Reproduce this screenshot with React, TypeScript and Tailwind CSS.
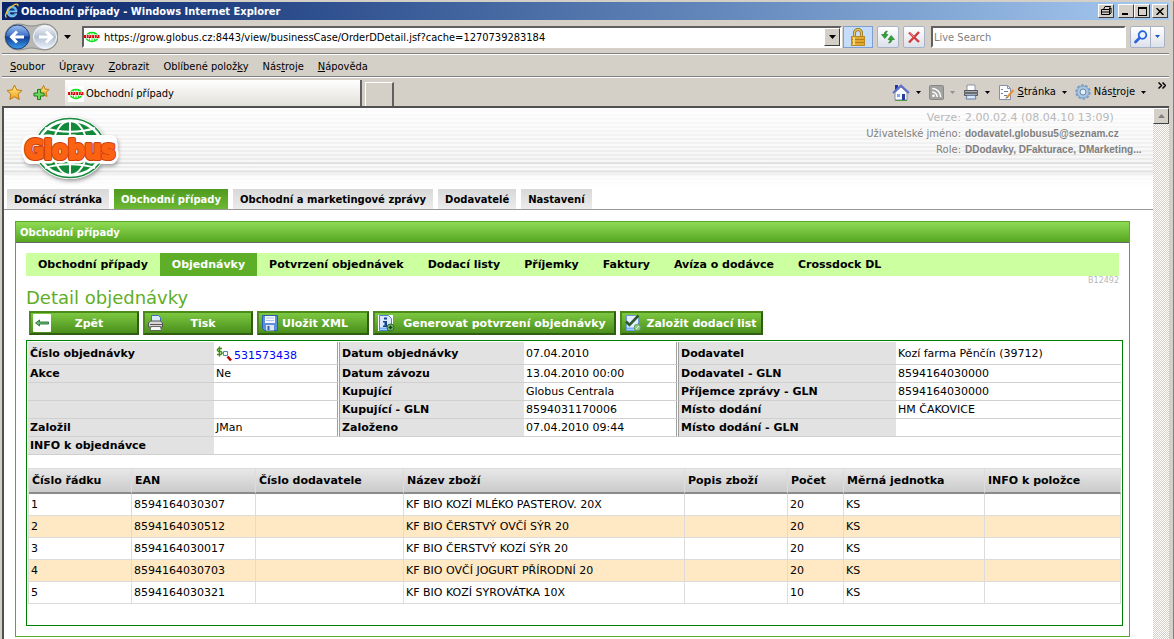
import React, { useState } from 'react';

const MAIN_TABS = [
  'Domácí stránka',
  'Obchodní případy',
  'Obchodní a marketingové zprávy',
  'Dodavatelé',
  'Nastavení',
];

const SUB_TABS = [
  'Obchodní případy',
  'Objednávky',
  'Potvrzení objednávek',
  'Dodací listy',
  'Příjemky',
  'Faktury',
  'Avíza o dodávce',
  'Crossdock DL',
];

// [before, accelerator, after]
const MENU = [
  ['', 'S', 'oubor'],
  ['Úp', 'r', 'avy'],
  ['', 'Z', 'obrazit'],
  ['Oblíbené polož', 'k', 'y'],
  ['Nás', 't', 'roje'],
  ['', 'N', 'ápověda'],
];

const INFO_ROWS = [
  ['Číslo objednávky', '531573438', 'Datum objednávky', '07.04.2010', 'Dodavatel', 'Kozí farma Pěnčín (39712)'],
  ['Akce', 'Ne', 'Datum závozu', '13.04.2010 00:00', 'Dodavatel - GLN', '8594164030000'],
  ['', '', 'Kupující', 'Globus Centrala', 'Příjemce zprávy - GLN', '8594164030000'],
  ['', '', 'Kupující - GLN', '8594031170006', 'Místo dodání', 'HM ČAKOVICE'],
  ['Založil', 'JMan', 'Založeno', '07.04.2010 09:44', 'Místo dodání - GLN', ''],
];

const ITEM_HEAD = ['Číslo řádku', 'EAN', 'Číslo dodavatele', 'Název zboží', 'Popis zboží', 'Počet', 'Měrná jednotka', 'INFO k položce'];

const ITEMS = [
  ['1', '8594164030307', '', 'KF BIO KOZÍ MLÉKO PASTEROV. 20X', '', '20', 'KS', ''],
  ['2', '8594164030512', '', 'KF BIO ČERSTVÝ OVČÍ SÝR 20', '', '20', 'KS', ''],
  ['3', '8594164030017', '', 'KF BIO ČERSTVÝ KOZÍ SÝR 20', '', '20', 'KS', ''],
  ['4', '8594164030703', '', 'KF BIO OVČÍ JOGURT PŘÍRODNÍ 20', '', '20', 'KS', ''],
  ['5', '8594164030321', '', 'KF BIO KOZÍ SYROVÁTKA 10X', '', '10', 'KS', ''],
];

const RAISED = 'border border-t-white border-l-white border-r-[#404040] border-b-[#404040] bg-[#d4d0c8]';

const IeIcon = () => (
  <svg width="16" height="16" viewBox="0 0 16 16" fill="none">
    <path d="M13 9H5.200c.2 2.400 1.600 3 3 3 1.200 0 2-.5 2.400-1.300h2.300C12 13.200 10.300 14 8.200 14 5 14 2.900 11.900 2.900 8.700 2.900 5.500 5 3.200 8.100 3.200 11.300 3.200 13.200 5.500 13 9z" fill="#4db1f2" stroke="#d6efff" strokeWidth=".5" />
    <path d="M5.400 7.400h5.200C10.400 6 9.500 5.200 8.100 5.200S5.600 6 5.400 7.400z" fill="#16337a" />
    <path d="M2.500 14.500C-.5 13 4 5.500 9 2.500c3-1.900 5.700-2 4.800.8" stroke="#f7c531" strokeWidth="1.300" />
  </svg>
);

const SiteIcon = () => (
  <svg width="16" height="16" viewBox="0 0 16 16" className="shrink-0">
    <rect width="16" height="16" fill="#fff" />
    <ellipse cx="8" cy="8" rx="6" ry="4.500" fill="none" stroke="#12e01c" strokeWidth="1.500" />
    <path d="M5.500 4v8M8 3.500v9M10.500 4v8" stroke="#12e01c" />
    <path d="M0 7.500h16" stroke="#fff" strokeWidth="4" />
    <path d="M0 7.500h16" stroke="#e01010" strokeWidth="3" strokeDasharray="2 .7" />
    <path d="M1 8.500h1M5 8.500h1M9 8.500h1M13 8.500h1" stroke="#800" />
  </svg>
);

const NavArrows = () => (
  <svg width="54" height="28" viewBox="0 0 54 28">
    <defs>
      <linearGradient id="back" x1="0" y1="0" x2="0" y2="1">
        <stop offset="0" stopColor="#9fc0ee" />
        <stop offset=".45" stopColor="#3f70c6" />
        <stop offset=".5" stopColor="#123c93" />
        <stop offset="1" stopColor="#39a0ee" />
      </linearGradient>
      <linearGradient id="fwd" x1="0" y1="0" x2="0" y2="1">
        <stop offset="0" stopColor="#f4f6fa" />
        <stop offset=".5" stopColor="#b4c0d2" />
        <stop offset="1" stopColor="#e9f1fb" />
      </linearGradient>
    </defs>
    <path d="M14 1C20 1 22 3 27.500 3S36 1 41 1a13 13 0 0 1 0 26c-5 0-8-2-13.500-2S20 27 14 27A13 13 0 0 1 14 1z" fill="#b7b7b5" stroke="#8b8b88" />
    <circle cx="13.500" cy="14" r="12" fill="url(#back)" stroke="#21427f" />
    <circle cx="41" cy="14" r="11.500" fill="url(#fwd)" stroke="#f5f8fc" />
    <path d="M20 14H8M13 8.500 7.500 14l5.500 5.500" fill="none" stroke="#fff" strokeWidth="3" />
    <path d="M35 14h12M42 8.500l5.500 5.500-5.500 5.500" fill="none" stroke="#fff" strokeWidth="3" />
  </svg>
);

const Caret = ({ className = 'fill-black' }: { className?: string }) => (
  <svg width="7" height="4" viewBox="0 0 7 4" className={className}>
    <path d="M0 0h7L3.500 4z" />
  </svg>
);

const SmallCaret = ({ className = 'fill-black' }: { className?: string }) => (
  <svg width="5" height="3" viewBox="0 0 5 3" className={className}>
    <path d="M0 0h5L2.500 3z" />
  </svg>
);

const LockIcon = () => (
  <svg width="14" height="18" viewBox="0 0 14 18">
    <path d="M3.500 9V5a3.500 3.500 0 0 1 7 0v4" fill="none" stroke="#8a6a1c" strokeWidth="3" />
    <path d="M3.500 9V5a3.500 3.500 0 0 1 7 0v4" fill="none" stroke="#edc95c" strokeWidth="1.500" />
    <rect x=".5" y="8.500" width="13" height="9" fill="#e2a92d" stroke="#b98a26" />
    <path d="M1 11.500h12M1 14.500h12" stroke="#b27d16" />
    <path d="M3 9v8" stroke="#f6d77e" strokeWidth="2" />
  </svg>
);

const RefreshIcon = () => (
  <svg width="16" height="16" viewBox="0 0 16 16">
    <path d="M7.500 2C5 2 4 4 4 5.500H1.500L4.800 9.500 8 5.500H6c0-1.300.5-2.500 1.500-3.500z" fill="#31a336" stroke="#1b7a25" strokeWidth=".6" />
    <path d="M8.500 14c2.500 0 3.500-2 3.500-3.500h2.500L11.200 6.500 8 10.500h2c0 1.300-.5 2.500-1.500 3.500z" fill="#31a336" stroke="#1b7a25" strokeWidth=".6" />
  </svg>
);

const StopIcon = () => (
  <svg width="14" height="14" viewBox="0 0 14 14">
    <path d="M2 2.500l10 9.500M12 2 2 12.500" stroke="#d03a3a" strokeWidth="2.400" />
    <path d="M2.500 2.500 7 7" stroke="#ee8a88" />
  </svg>
);

const SearchIcon = () => (
  <svg width="14" height="14" viewBox="0 0 14 14" fill="none">
    <circle cx="8.500" cy="5" r="3.800" stroke="#2a62e0" strokeWidth="1.800" fill="#eaf4ff" />
    <path d="M5.500 8 1.500 12" stroke="#2a62e0" strokeWidth="2.600" strokeLinecap="round" />
  </svg>
);

const Star = () => (
  <svg width="17" height="17" viewBox="0 0 17 17">
    <defs>
      <linearGradient id="star" x1="0" y1="0" x2="0" y2="1">
        <stop offset="0" stopColor="#fff08a" />
        <stop offset="1" stopColor="#f2a01c" />
      </linearGradient>
    </defs>
    <path d="M8.500 1l2.200 4.900 5.300.6-3.900 3.600 1.100 5.400-4.700-2.700-4.700 2.700 1.100-5.400L1 6.500l5.300-.6z" fill="url(#star)" stroke="#c07a12" />
  </svg>
);

const StarAdd = () => (
  <svg width="17" height="17" viewBox="0 0 17 17">
    <path d="M10.500 1.500l1.600 3.600 4 .4-3 2.800.9 4.200-3.500-2-3.500 2 .9-4.200-3-2.800 4-.4z" fill="url(#star)" stroke="#c07a12" />
    <path d="M4.500 5.500h3v3.500h3.500v3H7.500v3.500h-3V12H1V9h3.500z" fill="#6fd65b" stroke="#1f7f20" />
  </svg>
);

const HomeIcon = () => (
  <svg width="18" height="17" viewBox="0 0 18 17">
    <path d="M3 1h3v5H3z" fill="#2430b0" />
    <path d="M3 8.500 9 3l6 5.500V16H3z" fill="#f7f9ff" stroke="#7d8cb0" />
    <path d="M1 9 9 1.500 17 9" fill="none" stroke="#5a6fc8" strokeWidth="2" />
    <path d="M10 10h3v6h-3z" fill="#2a3a98" />
    <path d="M5 10h3v3H5z" fill="#7aa8e8" />
    <path d="M3 16.500h12" stroke="#4f9a3e" />
  </svg>
);

const RssIcon = () => (
  <svg width="15" height="15" viewBox="0 0 15 15" fill="none">
    <rect x=".5" y=".5" width="14" height="14" rx="1" fill="#a3a3a1" stroke="#888" />
    <circle cx="4.500" cy="10.800" r="1.300" fill="#fff" />
    <path d="M3.200 7a5 5 0 0 1 5 5M3.200 3.500a8.500 8.500 0 0 1 8.500 8.500" stroke="#fff" strokeWidth="1.500" />
  </svg>
);

const PrinterIcon = () => (
  <svg width="16" height="16" viewBox="0 0 16 16">
    <path d="M4 1h8v6H4z" fill="#fff" stroke="#8a93a5" />
    <path d="M1.500 6.500h13v5h-13z" fill="#a9abb2" stroke="#54565e" />
    <path d="M1 9h14" stroke="#6a6c73" strokeWidth="2" />
    <path d="M4 11.500h8l1 3.500H3z" fill="#d5e8fc" stroke="#6d7fa0" />
  </svg>
);

const PageIcon = () => (
  <svg width="17" height="17" viewBox="0 0 17 17">
    <path d="M1.500 1.500h8l3 3v11h-11z" fill="#fdfdff" stroke="#8690a8" />
    <path d="M9.500 1.500v3h3" fill="none" stroke="#8690a8" />
    <path d="M3 5.500h2M6 7.500h4M3 9.500h2M6 11.500h3" stroke="#7380a0" />
    <path d="M15.500 6 9 13.500" stroke="#e8912e" strokeWidth="2" />
    <path d="M9.300 13 8 14.500" stroke="#333" />
  </svg>
);

const GearIcon = () => (
  <svg width="16" height="16" viewBox="0 0 16 16" fill="none">
    <circle cx="8" cy="8" r="6.700" stroke="#7899bd" strokeWidth="2" strokeDasharray="2.600 1.600" />
    <circle cx="8" cy="8" r="4.800" stroke="#a9c6e4" strokeWidth="3" />
    <circle cx="8" cy="8" r="6" stroke="#6f93bb" strokeWidth=".7" />
    <circle cx="8" cy="8" r="3" fill="#e6eef6" stroke="#6386ad" />
  </svg>
);

// white halo, dark rim, orange face
const LOGO_LAYERS = [
  { fill: '#ffffff', stroke: '#ffffff', width: 9 },
  { fill: '#c8400c', stroke: '#c8400c', width: 4 },
  { fill: '#fb6313', stroke: '#fb6313', width: 2 },
];

const GlobusLogo = () => (
  <svg width="104" height="72" viewBox="0 0 104 72" role="img" aria-label="Globus">
    <defs>
      <filter id="soft" x="-20%" y="-20%" width="140%" height="150%">
        <feDropShadow dx="1" dy="2" stdDeviation="2" floodColor="#555" floodOpacity=".6" />
      </filter>
    </defs>
    <g filter="url(#soft)">
      <ellipse cx="51" cy="34" rx="36" ry="31" fill="#fff" />
      <rect x="5" y="22" width="93" height="28" rx="6" fill="#fff" />
    </g>
    <ellipse cx="51" cy="34" rx="34.500" ry="29.500" fill="none" stroke="#128a3a" strokeWidth="1.500" />
    <ellipse cx="51" cy="34" rx="31" ry="26" fill="#128a3a" />
    <g fill="none" stroke="#fff" strokeWidth="2">
      <path d="M51 6v56" />
      <ellipse cx="51" cy="34" rx="17" ry="27" />
      <path d="M26 14c14 5 36 5 50 0M26 54c14-5 36-5 50 0" />
    </g>
    <rect x="4" y="21" width="94" height="27" rx="6" fill="#fff" />
    {LOGO_LAYERS.map((l, i) => (
      <text
        key={l.fill}
        x="51"
        y="45"
        textAnchor="middle"
        fill={l.fill}
        stroke={l.stroke}
        strokeWidth={l.width}
        strokeLinejoin="round"
        aria-hidden={i > 0}
        className="font-['DejaVu_Sans_Condensed','DejaVu_Sans',sans-serif] text-[26px] font-bold"
      >
        Globus
      </text>
    ))}
  </svg>
);

const BackArrow = () => (
  <svg width="18" height="18" viewBox="0 0 18 18">
    <rect width="18" height="18" rx="1" fill="#fff" />
    <path d="M2.500 9 6.500 6v2h9v2h-9v2z" fill="#6db86e" stroke="#2f7a44" />
  </svg>
);

const PrintIcon = () => (
  <svg width="18" height="18" viewBox="0 0 18 18">
    <path d="M4.500 8V1.500h7l2 2V8z" fill="#d9e9ff" stroke="#3d6fc4" />
    <path d="M1.500 13V9l2-2h10l2 2v4z" fill="#d7d7d7" stroke="#555" />
    <path d="M3 10.500h12" stroke="#555" />
    <path d="M4 12.500h9.500l1 4H3z" fill="#f5f5f5" stroke="#666" />
  </svg>
);

const SaveIcon = () => (
  <svg width="18" height="18" viewBox="0 0 18 18">
    <path d="M1.500 1.500h15v15h-13l-2-2z" fill="#5c8fdc" stroke="#2a5cb0" />
    <path d="M4 2h10v7H4z" fill="#f6f9ff" />
    <path d="M5 4h8M5 6.500h8" stroke="#a9c4ea" />
    <path d="M5 11h8v5.500H5z" fill="#dfe5ee" />
    <path d="M6.500 12h2v4h-2z" fill="#2a5cb0" />
  </svg>
);

const InfoDocIcon = () => (
  <svg width="18" height="18" viewBox="0 0 18 18">
    <rect x="1" y="1" width="15" height="16" fill="#fff" />
    <path d="M2.500 1.500h9l3 3v12h-12z" fill="#dbe9ff" stroke="#4a82cf" />
    <path d="M7 3.500h3v2H7zM6 7h4v4.500h1.500V13H6v-1.500h1.500v-3H6z" fill="#17438f" />
    <path d="M3 14.500h8" stroke="#6db2ff" strokeWidth="2" />
    <circle cx="13.500" cy="13.500" r="3.500" fill="#7fc676" stroke="#24662b" />
    <path d="M13.500 11.500v4M11.500 13.500h4" stroke="#123f18" strokeWidth="1.500" />
  </svg>
);

const CheckDocIcon = () => (
  <svg width="18" height="18" viewBox="0 0 18 18">
    <path d="M2.500 1.500h9l3 3v12h-12z" fill="#e6efff" stroke="#6c97d4" />
    <path d="M3 14.500h8" stroke="#6db2ff" strokeWidth="2" />
    <path d="M2 7.500 5.500 11 14.500 1.500" fill="none" stroke="#2c5a2e" strokeWidth="2.600" />
    <circle cx="13.500" cy="13.500" r="3.300" fill="#8fc986" stroke="#5e9a58" />
    <path d="m12 15 3-3" stroke="#e8f6e4" />
  </svg>
);

const MoneySearchIcon = () => (
  <svg width="16" height="16" viewBox="0 0 16 16" fill="none">
    <path d="M6 2.500H2.500L1.500 3.500v1l1 1H5l1 1v1l-1 1H1M3.500.5v10" stroke="#3c8f12" strokeWidth="1.400" />
    <path d="M7.500 5.500h4v4h-4z" fill="#f4faff" stroke="#5688a8" />
    <path d="m11.500 10.500 3.500 4" stroke="#c00000" strokeWidth="2.500" />
  </svg>
);

const ToolItem = ({ icon, caret, children }: { icon: React.ReactNode; caret?: string; children?: React.ReactNode }) => (
  <button className="flex items-center gap-[3px]">
    {icon}
    {children && <span>{children}</span>}
    <span className="ml-[3px]">
      <SmallCaret className={caret || 'fill-black'} />
    </span>
  </button>
);

const BUTTONS = [
  { label: 'Zpět', icon: <BackArrow />, size: 'w-[110px] pr-[10px]' },
  { label: 'Tisk', icon: <PrintIcon />, size: 'w-[110px] pr-[10px]' },
  { label: 'Uložit XML', icon: <SaveIcon />, size: 'w-[112px] pr-[16px]' },
  { label: 'Generovat potvrzení objednávky', icon: <InfoDocIcon />, size: 'w-[243px]' },
  { label: 'Založit dodací list', icon: <CheckDocIcon />, size: 'w-[143px]' },
];

const Chrome = () => (
  <header className="text-[11px] font-['DejaVu_Sans_Condensed','DejaVu_Sans',sans-serif]">
    <div className="flex h-[18px] items-center bg-linear-to-r from-[#0a246a] to-[#a6caf0] pr-px pl-[2px] text-white">
      <IeIcon />
      <span className="grow pt-px pl-px font-bold whitespace-nowrap">Obchodní případy - Windows Internet Explorer</span>
      <button aria-label="Tisk okna" className={`${RAISED} mr-1 flex h-[14px] w-4 items-center justify-center`}>
        <svg width="12" height="10" viewBox="0 0 12 10" fill="none" stroke="#000">
          <path d="M3.500 3.500 5 .5h5.500L9 3.500M1.500 3.500h8v5h-8zM9.500 3.500l1.500-1.500v5l-1.500 1.500M1.500 6h8" />
        </svg>
      </button>
      <button aria-label="Minimalizovat" className={`${RAISED} flex h-[14px] w-4 items-center justify-center`}>
        <svg width="10" height="8"><path d="M1 6h6v2H1z" /></svg>
      </button>
      <button aria-label="Maximalizovat" className={`${RAISED} mr-[2px] flex h-[14px] w-4 items-center justify-center`}>
        <svg width="9" height="9"><path d="M0 0h9v9H0zM1 2v6h7V2z" fillRule="evenodd" /></svg>
      </button>
      <button aria-label="Zavřít" className={`${RAISED} flex h-[14px] w-4 items-center justify-center`}>
        <svg width="8" height="7"><path d="M.5 0l7 7M7.500 0l-7 7" stroke="#000" strokeWidth="1.500" /></svg>
      </button>
    </div>

    <div className="flex h-[34px] items-center border-b border-[#808080] pr-1 pl-[2px]">
      <button aria-label="Zpět a vpřed" className="shrink-0"><NavArrows /></button>
      <button aria-label="Poslední stránky" className="mr-[11px] ml-[6px]"><Caret /></button>
      <div className="flex h-[22px] grow items-center border-2 border-t-[#606060] border-r-white border-b-white border-l-[#606060] bg-white">
        <SiteIcon />
        <input
          aria-label="Adresa"
          className="min-w-0 grow bg-transparent pt-[2px] pl-[4px] outline-none"
          defaultValue="https://grow.globus.cz:8443/view/businessCase/OrderDDetail.jsf?cache=1270739283184"
        />
        <button aria-label="Zobrazit adresy" className={`${RAISED} flex h-[18px] w-4 items-center justify-center`}><Caret /></button>
      </div>
      <button aria-label="Zabezpečení" className="ml-px flex h-[22px] w-[30px] items-center justify-center border border-[#7e9fd0] bg-[#c6dcfb]">
        <LockIcon />
      </button>
      <button aria-label="Obnovit" className="ml-1 flex h-[22px] w-[22px] items-center justify-center rounded-xs border border-[#a9b3c8] bg-linear-to-b from-white to-[#dde1ea]">
        <RefreshIcon />
      </button>
      <button aria-label="Zastavit" className="ml-1 flex h-[22px] w-[22px] items-center justify-center rounded-xs border border-[#a9b3c8] bg-linear-to-b from-white to-[#dde1ea]">
        <StopIcon />
      </button>
      <input
        aria-label="Hledat"
        placeholder="Live Search"
        className="ml-[6px] h-[22px] w-[195px] border-2 border-t-[#606060] border-r-white border-b-white border-l-[#606060] bg-white px-px pt-[2px] outline-none placeholder:text-[#808080]"
      />
      <div className="ml-1 flex h-[22px] rounded-xs border border-[#a9b3c8] bg-linear-to-b from-white to-[#dde1ea]">
        <button aria-label="Spustit hledání" className="flex w-[20px] items-center justify-center border-r border-[#a9b3c8]"><SearchIcon /></button>
        <button aria-label="Možnosti hledání" className="flex w-[13px] items-center justify-center"><SmallCaret className="fill-[#1f55c8]" /></button>
      </div>
    </div>

    <nav className="flex h-[23px] items-center gap-[14px] border-t border-b border-t-white border-b-[#808080] pt-[2px] pl-2">
      {MENU.map(([a, b, c]) => (
        <button key={a + b + c}>
          {a}
          <span className="underline">{b}</span>
          {c}
        </button>
      ))}
    </nav>

    <div className="flex h-[29px] items-end border-t border-white">
      <div className="flex h-full w-[63px] items-center gap-[10px] pl-1">
        <button aria-label="Oblíbené"><Star /></button>
        <button aria-label="Přidat k oblíbeným"><StarAdd /></button>
      </div>
      <button className="flex h-[26px] w-[297px] items-center gap-[2px] border-r-2 border-[#606060] bg-linear-to-b from-white to-[#e2e0da] pt-px pl-[3px]">
        <SiteIcon />
        Obchodní případy
      </button>
      <button aria-label="Nová karta" className="ml-[3px] h-6 w-[29px] border border-r-2 border-b-0 border-white border-r-[#606060]" />
      <div className="ml-auto flex h-full items-center gap-2 pr-[3px]">
        <ToolItem icon={<HomeIcon />} />
        <ToolItem icon={<RssIcon />} caret="fill-[#909090]" />
        <ToolItem icon={<PrinterIcon />} />
        <ToolItem icon={<PageIcon />}><u>S</u>tránka</ToolItem>
        <ToolItem icon={<GearIcon />}>Nás<u>t</u>roje</ToolItem>
        <button aria-label="Další nástroje" className="self-start pt-1 pl-1">
          <svg width="8" height="7" viewBox="0 0 8 7" fill="none" stroke="#000" strokeWidth="1.500">
            <path d="M.5.5l3 3-3 3M4.500.5l3 3-3 3" />
          </svg>
        </button>
      </div>
    </div>
  </header>
);

const Banner = () => (
  <div className="flex h-[81px] justify-between bg-[repeating-linear-gradient(rgba(255,255,255,0.6)_0_2px,transparent_2px_4px),linear-gradient(#fcfcfc,#ebebeb_54px,#d9d9d9_55px,#f0f0f0_57px,#ececec_63px,#d6d6d6_64px,#d6d6d6_65px,#f7f7f7_67px,#ffffff)] pl-[15px]">
    <div className="pt-[6px]"><GlobusLogo /></div>
    <dl className="grid h-12 grid-cols-[auto_188px] gap-x-1 pt-[2px] text-[10px] leading-4 whitespace-nowrap text-[#808080]">
      <dt className="text-right text-[11px] text-[#b8b8b8]">Verze:</dt>
      <dd className="text-[11px] text-[#b8b8b8]">2.00.02.4 (08.04.10 13:09)</dd>
      <dt className="text-right">Uživatelské jméno:</dt>
      <dd className="font-['Liberation_Sans',sans-serif] font-bold">dodavatel.globusu5@seznam.cz</dd>
      <dt className="text-right">Role:</dt>
      <dd className="font-['Liberation_Sans',sans-serif] font-bold">DDodavky, DFakturace, DMarketing...</dd>
    </dl>
  </div>
);

const InfoTable = () => (
  <table className="w-full table-fixed border-separate border-spacing-0">
    <colgroup>
      <col className="w-[186px]" />
      <col className="w-[126px]" />
      <col className="w-[184px]" />
      <col className="w-[155px]" />
      <col className="w-[217px]" />
      <col />
    </colgroup>
    <tbody>
      {INFO_ROWS.map((row, r) => (
        <tr key={r} className={r === 0 ? 'h-[23px]' : 'h-[18px]'}>
          {row.map((cell, c) =>
            c % 2 === 0 ? (
              <th key={c} scope="row" className="border-b border-[#d0d0d0] bg-[#e2e2e2] px-[2px] pt-px text-left font-bold whitespace-nowrap">{cell}</th>
            ) : (
              <td key={c} className={`border-b border-[#d0d0d0] px-[2px] pt-px whitespace-nowrap ${c < 5 ? 'border-r-3 border-r-[#a0a0a0] [border-right-style:double]' : ''}`}>
                {r === 0 && c === 1 ? (
                  <a href="#objednavka" className="flex items-center gap-[2px] text-[#0000ff]">
                    <MoneySearchIcon />
                    <span className="pt-1">{cell}</span>
                  </a>
                ) : (
                  cell
                )}
              </td>
            )
          )}
        </tr>
      ))}
      <tr className="h-[18px]">
        <th scope="row" className="border-b border-[#d0d0d0] bg-[#e2e2e2] px-[2px] pt-px text-left font-bold whitespace-nowrap">INFO k objednávce</th>
        <td colSpan={5} className="border-b border-[#d0d0d0]" />
      </tr>
    </tbody>
  </table>
);

const ItemTable = () => (
  <table className="mt-[13px] w-full table-fixed border-separate border-spacing-0 border-t border-l border-[#dcdcdc]">
    <colgroup>
      <col className="w-[103px]" />
      <col className="w-[124px]" />
      <col className="w-[148px]" />
      <col />
      <col className="w-[103px]" />
      <col className="w-[56px]" />
      <col className="w-[141px]" />
      <col className="w-[136px]" />
    </colgroup>
    <thead>
      <tr className="h-[25px] bg-linear-to-b from-[#e8e8e8] to-[#c8c8c8]">
        {ITEM_HEAD.map(h => (
          <th key={h} scope="col" className="border-r border-b-2 border-r-[#dcdcdc] border-b-[#8b8b8b] px-[3px] pt-px text-left font-bold whitespace-nowrap">{h}</th>
        ))}
      </tr>
    </thead>
    <tbody>
      {ITEMS.map(row => (
        <tr key={row[0]} className="h-[22px] even:bg-[#ffe8c4]">
          {row.map((cell, i) => (
            <td key={i} className="border-r border-b border-[#dcdcdc] px-[2px] pt-px whitespace-nowrap">{cell}</td>
          ))}
        </tr>
      ))}
    </tbody>
  </table>
);

const App: React.FC = () => {
  const [mainTab, setMainTab] = useState(1);
  const [subTab, setSubTab] = useState(1);

  return (
    <div className="flex min-h-screen flex-col border-t-2 border-r border-l-2 border-[#d4d0c8] border-r-[#808080] bg-[#d4d0c8] pr-[4px] text-[11px] leading-[14px] text-black font-['DejaVu_Sans',sans-serif]">
      <Chrome />

      <div className="flex grow border-t-2 border-l-2 border-[#505050] bg-white">
        <main className="min-w-0 grow">
          <Banner />

          <nav className="flex gap-[5px] border-b border-[#999] pl-[3px] text-[10px] font-bold">
            {MAIN_TABS.map((tab, i) => (
              <button
                key={tab}
                onClick={() => setMainTab(i)}
                className={`h-5 px-[7px] pt-px whitespace-nowrap ${i === mainTab ? 'bg-linear-to-b from-[#4f9a1e] to-[#6cb833] text-white' : 'bg-linear-to-b from-[#d8d8d8] to-[#ececec]'}`}
              >
                {tab}
              </button>
            ))}
          </nav>

          <section className="mt-[11px] mr-[23px] ml-[11px] border border-[#5ba829]">
            <h2 className="flex h-[21px] items-center border-b border-[#666] bg-linear-to-b from-[#8fdb54] to-[#56a61f] pt-px pl-1 text-[10px] font-bold text-white">
              Obchodní případy
            </h2>
            <div className="pt-[10px] pr-[6px] pb-[10px] pl-[10px]">
              <nav className="mr-[4px] flex bg-[#ccff9f] font-bold">
                {SUB_TABS.map((tab, i) => (
                  <button
                    key={tab}
                    onClick={() => setSubTab(i)}
                    className={`h-[23px] px-3 pt-px whitespace-nowrap ${i === subTab ? 'bg-[#5fae27] text-white' : ''}`}
                  >
                    {tab}
                  </button>
                ))}
              </nav>
              <div className="mr-[4px] flex justify-end text-[8px] leading-[10px] text-[#b8b8b8]">B12492</div>
              <h1 className="text-[18px] leading-6 text-[#5fae27]">Detail objednávky</h1>

              <div className="mt-px flex gap-1 pl-[3px]">
                {BUTTONS.map(b => (
                  <button
                    key={b.label}
                    className={`${b.size} flex h-6 items-center border-2 border-t-[#4c8a1c] border-r-[#2f5e10] border-b-[#2f5e10] border-l-[#4c8a1c] bg-linear-to-b from-[#7cc840] to-[#4a8f1c] pl-[2px] font-bold whitespace-nowrap text-white`}
                  >
                    {b.icon}
                    <span className="grow pt-px text-center">{b.label}</span>
                  </button>
                ))}
              </div>

              <div className="mt-[5px] border border-[#008000] px-px pt-px pb-[21px]">
                <InfoTable />
                <ItemTable />
              </div>
            </div>
          </section>
        </main>

        <div className="w-4 shrink-0 bg-[repeating-conic-gradient(#ffffff_0_25%,#d4d0c8_0_50%)] bg-[length:2px_2px]">
          <button aria-label="Posunout nahoru" className={`${RAISED} flex h-4 w-4 items-center justify-center`}>
            <svg width="7" height="4"><path d="M0 4h7L3.500 0z" fill="#808080" /></svg>
          </button>
        </div>
      </div>
    </div>
  );
};

export default App;
